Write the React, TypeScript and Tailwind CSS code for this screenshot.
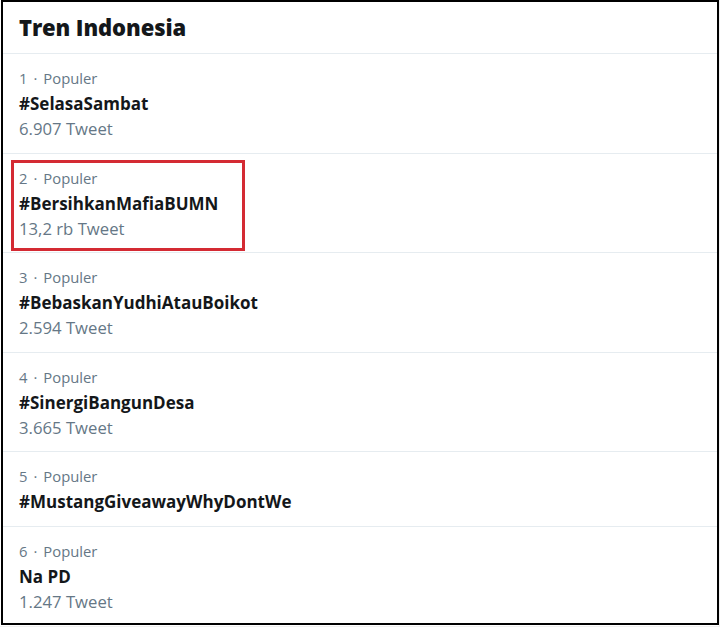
import React from "react";

interface Trend {
  rank: number;
  label: string;
  tag: string;
  count?: string;
  highlight?: boolean;
}

const trends: Trend[] = [
  { rank: 1, label: "Populer", tag: "#SelasaSambat", count: "6.907 Tweet" },
  { rank: 2, label: "Populer", tag: "#BersihkanMafiaBUMN", count: "13,2 rb Tweet", highlight: true },
  { rank: 3, label: "Populer", tag: "#BebaskanYudhiAtauBoikot", count: "2.594 Tweet" },
  { rank: 4, label: "Populer", tag: "#SinergiBangunDesa", count: "3.665 Tweet" },
  { rank: 5, label: "Populer", tag: "#MustangGiveawayWhyDontWe" },
  { rank: 6, label: "Populer", tag: "Na PD", count: "1.247 Tweet" },
];

const TrendRow = ({ trend, last }: { trend: Trend; last: boolean }) => {
  return (
    <div className={`relative px-[16px] pt-[12px] pb-[11.5px] ${last ? "" : "border-b border-[#e6ecf0]"}`}>
      {/* highlight box drawn over the row */}
      {trend.highlight && (
        <div className="absolute left-[8px] top-[6px] w-[234px] h-[91px] border-[3px] border-[#d42a33]" />
      )}
      <div className="h-[25px] leading-[25px] text-[14.8px] text-[#657786]">
        {trend.rank}
        <span className="mx-[6px]">·</span>
        {trend.label}
      </div>
      <div className="h-[25px] leading-[25px] text-[17px] font-bold text-[#14171a]">
        {trend.tag}
      </div>
      {trend.count && (
        <div className="h-[25px] leading-[25px] text-[16.7px] text-[#657786]">
          {trend.count}
        </div>
      )}
    </div>
  );
};

export default function App() {
  return (
    <div
      className="w-[720px] h-[627px] bg-[#f0f0f0]"
      style={{ fontFamily: '"Open Sans", "Noto Sans", sans-serif' }}
    >
      <div className="w-[719px] h-[626px] bg-white pl-[1px]">
        <div className="w-[718px] h-[625px] border-2 border-black bg-white">
          <div className="h-[52px] px-[16px] flex items-center border-b border-[#e6ecf0]">
            <h2 className="text-[22px] font-extrabold text-[#14171a] tracking-[-0.1px]">
              Tren Indonesia
            </h2>
          </div>
          {trends.map((t, i) => (
            <TrendRow key={t.rank} trend={t} last={i === trends.length - 1} />
          ))}
        </div>
      </div>
    </div>
  );
}
